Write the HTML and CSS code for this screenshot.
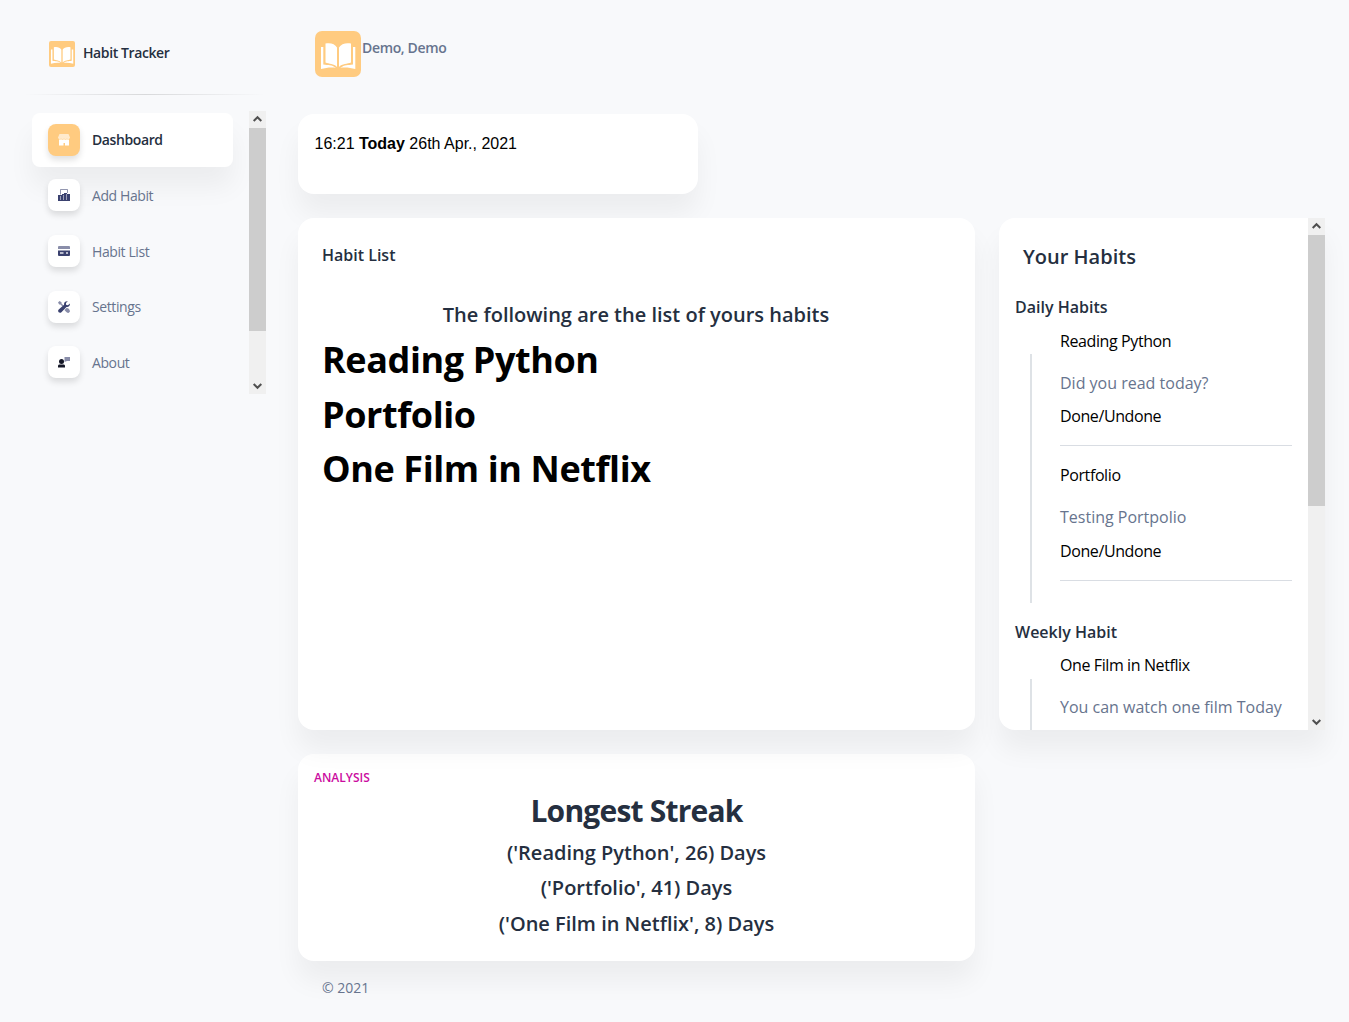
FILE: index.html
```html
<!DOCTYPE html>
<html lang="en">
<head>
<meta charset="utf-8">
<title>Habit Tracker</title>
<link rel="stylesheet" href="styles.css">
</head>
<body>
<svg class="defs" width="0" height="0" aria-hidden="true">
  <symbol id="book" viewBox="0 0 46 46">
    <path fill="#fff" d="M10.500 12.500C15 11.500 20 12.500 22 16.500V36C19 32.500 14 33 10.500 31.500zM36 12.500C31.500 11.500 26 12.500 24 16.500V36C27 32.500 32.500 33 36 31.500zM6 16h2.300v17.500c5 1 8.500 0 12.700 3.500-4-1-10-.3-15 1zM40.300 16H38v17.500c-5 1-8.500 0-12.700 3.500 4-1 10-.3 15 1z"/>
  </symbol>
  <symbol id="up" viewBox="0 0 17 17"><path d="M4.700 10 8.500 6.200 12.300 10" fill="none" stroke="#505050" stroke-width="2"/></symbol>
  <symbol id="down" viewBox="0 0 17 17"><path d="M4.700 7 8.500 10.800 12.300 7" fill="none" stroke="#505050" stroke-width="2"/></symbol>
</svg>
<div class="page">
  <aside class="sidebar">
    <div class="brand"><svg class="brand-logo" viewBox="3 3 40 40"><use href="#book" width="46" height="46"/></svg><span>Habit Tracker</span></div>
    <div class="divider"></div>
    <div class="nav-scroll">
      <nav class="nav">
        <a class="nav-item active"><span class="nav-icon"><svg viewBox="0 0 12 12"><path fill="#fff" opacity=".6" d="M1.500 0h9L12 3.500C12 5 10 5.500 9 4.500 8 5.500 7 5.500 6 4.500 5 5.500 4 5.500 3 4.500 2 5.500 0 5 0 3.500z"/><path fill="#fff" d="M1 5.500c1 .3 1.500 0 2-.3 1 .6 2 .6 3 0 1 .6 2 .6 3 0 .5.300 1 .6 2 .3V11.500H7V9H5.500v2.500H1z"/></svg></span>Dashboard</a>
        <a class="nav-item"><span class="nav-icon"><svg viewBox="0 0 12 12"><path fill="none" stroke="#3a416f" opacity=".55" d="M2.500 5.500v-5h7V4"/><path fill="#3a416f" d="M0 6h4V5h2V4h3v1h3v7H0z"/><path fill="#fff" opacity=".5" d="M2 7h1v4H2zM5 6h1v5H5zM8 5h1v6H8z"/></svg></span>Add Habit</a>
        <a class="nav-item"><span class="nav-icon"><svg viewBox="0 0 12 12"><path fill="#3a416f" opacity=".6" d="M0 2q0-1 1-1h10q1 0 1 1v2H0z"/><path fill="#3a416f" d="M0 5.500h12V10q0 1-1 1H1q-1 0-1-1z"/><path fill="#fff" opacity=".65" d="M2 7h3.500v2H2zM8 7h2v2H8z"/></svg></span>Habit List</a>
        <a class="nav-item"><span class="nav-icon"><svg viewBox="0 0 12 12"><path fill="#3a416f" opacity=".6" d="M0 1.500 1.500 0l2 1.200v1.300l2 2-1 1-2-2H1.200zM6.500 9l2-2c1.500-.3 3.500 1.500 3.500 3.500L10.500 12C9 12 7.500 10.500 6.500 9z"/><path fill="#3a416f" d="M9.800.2C7 0 5.800 1.500 6.100 3.700L.7 8.500c-1.800 1.700.8 4.600 2.700 2.700l5.100-5.300C10.700 6.200 12.200 5 11.900 2.500L9.900 4.300 8 3.800V2z"/></svg></span>Settings</a>
        <a class="nav-item"><span class="nav-icon"><svg viewBox="0 0 12 12"><path fill="#3a416f" opacity=".6" d="M6.500 1H12v4H9L6.500 6z"/><circle cx="3.500" cy="5.500" r="2.500" fill="#141727"/><path fill="#141727" d="M0 11.500V10c0-1.200 1-1.500 2-1.500h3c1.200 0 2 .3 2 1.500v1.500z"/></svg></span>About</a>
      </nav>
      <div class="scrollbar"><svg><use href="#up"/></svg><div class="thumb thumb-nav"></div><svg class="last"><use href="#down"/></svg></div>
    </div>
  </aside>
  <main class="main">
    <header class="profile"><svg class="avatar"><use href="#book"/></svg><span>Demo, Demo</span></header>
    <section class="card clock">16:21 <b>Today</b> 26th Apr., 2021</section>
    <div class="columns">
      <section class="card habits">
        <h6>Habit List</h6>
        <h5>The following are the list of yours habits</h5>
        <h1>Reading Python</h1>
        <h1>Portfolio</h1>
        <h1>One Film in Netflix</h1>
      </section>
      <section class="card yours">
        <div class="yours-body">
          <h5>Your Habits</h5>
          <h6>Daily Habits</h6>
          <div class="timeline">
            <div class="rail"></div>
            <div class="entries">
              <div class="entry"><p>Reading Python</p><p class="note">Did you read today?</p><p class="state">Done/Undone</p></div>
              <div class="entry"><p>Portfolio</p><p class="note">Testing Portpolio</p><p class="state">Done/Undone</p></div>
            </div>
          </div>
          <h6 class="weekly">Weekly Habit</h6>
          <div class="timeline">
            <div class="rail"></div>
            <div class="entries">
              <div class="entry"><p>One Film in Netflix</p><p class="note">You can watch one film Today</p></div>
            </div>
          </div>
        </div>
        <div class="scrollbar"><svg><use href="#up"/></svg><div class="thumb thumb-yours"></div><svg class="last"><use href="#down"/></svg></div>
      </section>
    </div>
    <section class="card analysis">
      <div class="label">ANALYSIS</div>
      <h2>Longest Streak</h2>
      <h5>('Reading Python', 26) Days</h5>
      <h5>('Portfolio', 41) Days</h5>
      <h5>('One Film in Netflix', 8) Days</h5>
    </section>
    <footer>© 2021</footer>
  </main>
</div>
</body>
</html>
```
FILE: styles.css
```css
* { box-sizing: border-box; }
body { margin: 0; background: #f8f9fb; color: #252f40; font: 400 16px/24px "Open Sans", sans-serif; overflow: hidden; }
h1, h2, h5, h6, p { margin: 0; }
h5 { font-size: 20px; font-weight: 600; }
h6 { font-size: 16px; font-weight: 600; }
svg { display: block; flex: none; }
.defs { position: absolute; }
.page { display: flex; height: 1022px; }
.sidebar { width: 266px; flex: none; }
.brand { display: flex; align-items: center; gap: 8px; height: 94px; padding: 28px 0 14px 49px; font-size: 14px; font-weight: 600; letter-spacing: -0.4px; }
.brand-logo { width: 26px; height: 26px; border-radius: 2px; background: #ffcb80; }
.brand-logo + span { margin-top: -2px; }
.divider { height: 1px; margin-left: 24px; background: linear-gradient(90deg, transparent, rgba(0, 0, 0, .13), transparent); }
.nav-scroll { display: flex; height: 283px; margin-top: 16px; }
.nav { flex: 1; padding: 2.2px 16px 0 32px; overflow: hidden; }
.nav-item { display: flex; align-items: center; gap: 12px; height: 54px; margin-bottom: 1.7px; padding: 0 16px; border-radius: 8px; color: #67748e; font-size: 14px; letter-spacing: -0.4px; }
.nav-item.active { background: #fff; color: #252f40; font-weight: 600; box-shadow: 0 20px 27px rgba(0, 0, 0, .05); }
.nav-icon { display: flex; align-items: center; justify-content: center; width: 32px; height: 32px; margin-top: -1.1px; border-radius: 8px; background: #fff; box-shadow: 0 4px 6px rgba(0, 0, 0, .12); position: relative; }
.active .nav-icon { background: #ffcb80; }
.nav-icon svg { width: 12px; height: 12px; }
.scrollbar { display: flex; flex-direction: column; width: 17px; flex: none; background: #f0f0f0; }
.scrollbar svg { width: 17px; height: 17px; }
.scrollbar .last { margin-top: auto; }
.thumb { background: #cdcdcd; }
.thumb-nav { height: 203px; }
.thumb-yours { height: 271px; }
.main { flex: 1; padding: 0 24px 0 32px; }
.profile { display: flex; height: 114px; padding: 31px 0 0 17px; gap: 1px; color: #67748e; font-size: 14px; font-weight: 600; letter-spacing: -0.35px; }
.profile span { margin-top: 5px; }
.avatar { width: 46px; height: 46px; border-radius: 7px; background: #ffcb80; }
.card { background: #fff; border-radius: 16px; box-shadow: 0 20px 27px rgba(0, 0, 0, .05); }
.clock { width: 400px; height: 80px; padding: 18px 16.5px; color: #000; font-family: "Liberation Sans", Arial, sans-serif; }
.columns { display: grid; grid-template-columns: 677px 326px; gap: 24px; height: 512px; margin: 24px 0; }
.habits { padding: 25px 24px; }
.habits h5 { margin: 34px 0 18px; line-height: 27px; text-align: center; padding-right: 1px; }
.habits h1 { color: #000; font-size: 36px; line-height: 54.5px; font-weight: 700; letter-spacing: -0.4px; }
.habits h5 + h1 { margin-top: -13px; }
.yours { display: flex; border-radius: 16px 0 0 16px; overflow: hidden; }
.yours-body { flex: 1; padding: 27px 16px 0; overflow: hidden; }
.yours-body h5 { margin: 0 8px 26px; }
.timeline { display: flex; margin-top: 10px; }
.rail { width: 2px; margin: 25px 28px 0 15px; background: #dee2e6; }
.entries { flex: 1; color: #000; letter-spacing: -0.4px; padding-bottom: 22px; }
.entry { height: 117px; border-bottom: 1px solid #d9dde3; }
.entry + .entry { margin-top: 17px; height: 118px; }
.entry .note { margin: 18px 0 9px; color: #67748e; letter-spacing: 0; }
.entry + .entry .state { margin-top: 10px; }
.weekly { margin-top: 17px; }
.weekly + .timeline { margin-top: 9px; }
.weekly + .timeline .rail { margin-top: 26px; }
.analysis { width: 677px; height: 207px; padding: 12px 16px; text-align: center; }
.label { color: #cb0c9f; font-size: 12px; font-weight: 600; text-align: left; }
.analysis h2 { margin-bottom: 2.6px; font-size: 30px; line-height: 42px; letter-spacing: -0.8px; font-weight: 700; }
.analysis h5 { line-height: 35.5px; }
footer { margin: 15px 24px; color: #67748e; font-size: 14px; }
```
